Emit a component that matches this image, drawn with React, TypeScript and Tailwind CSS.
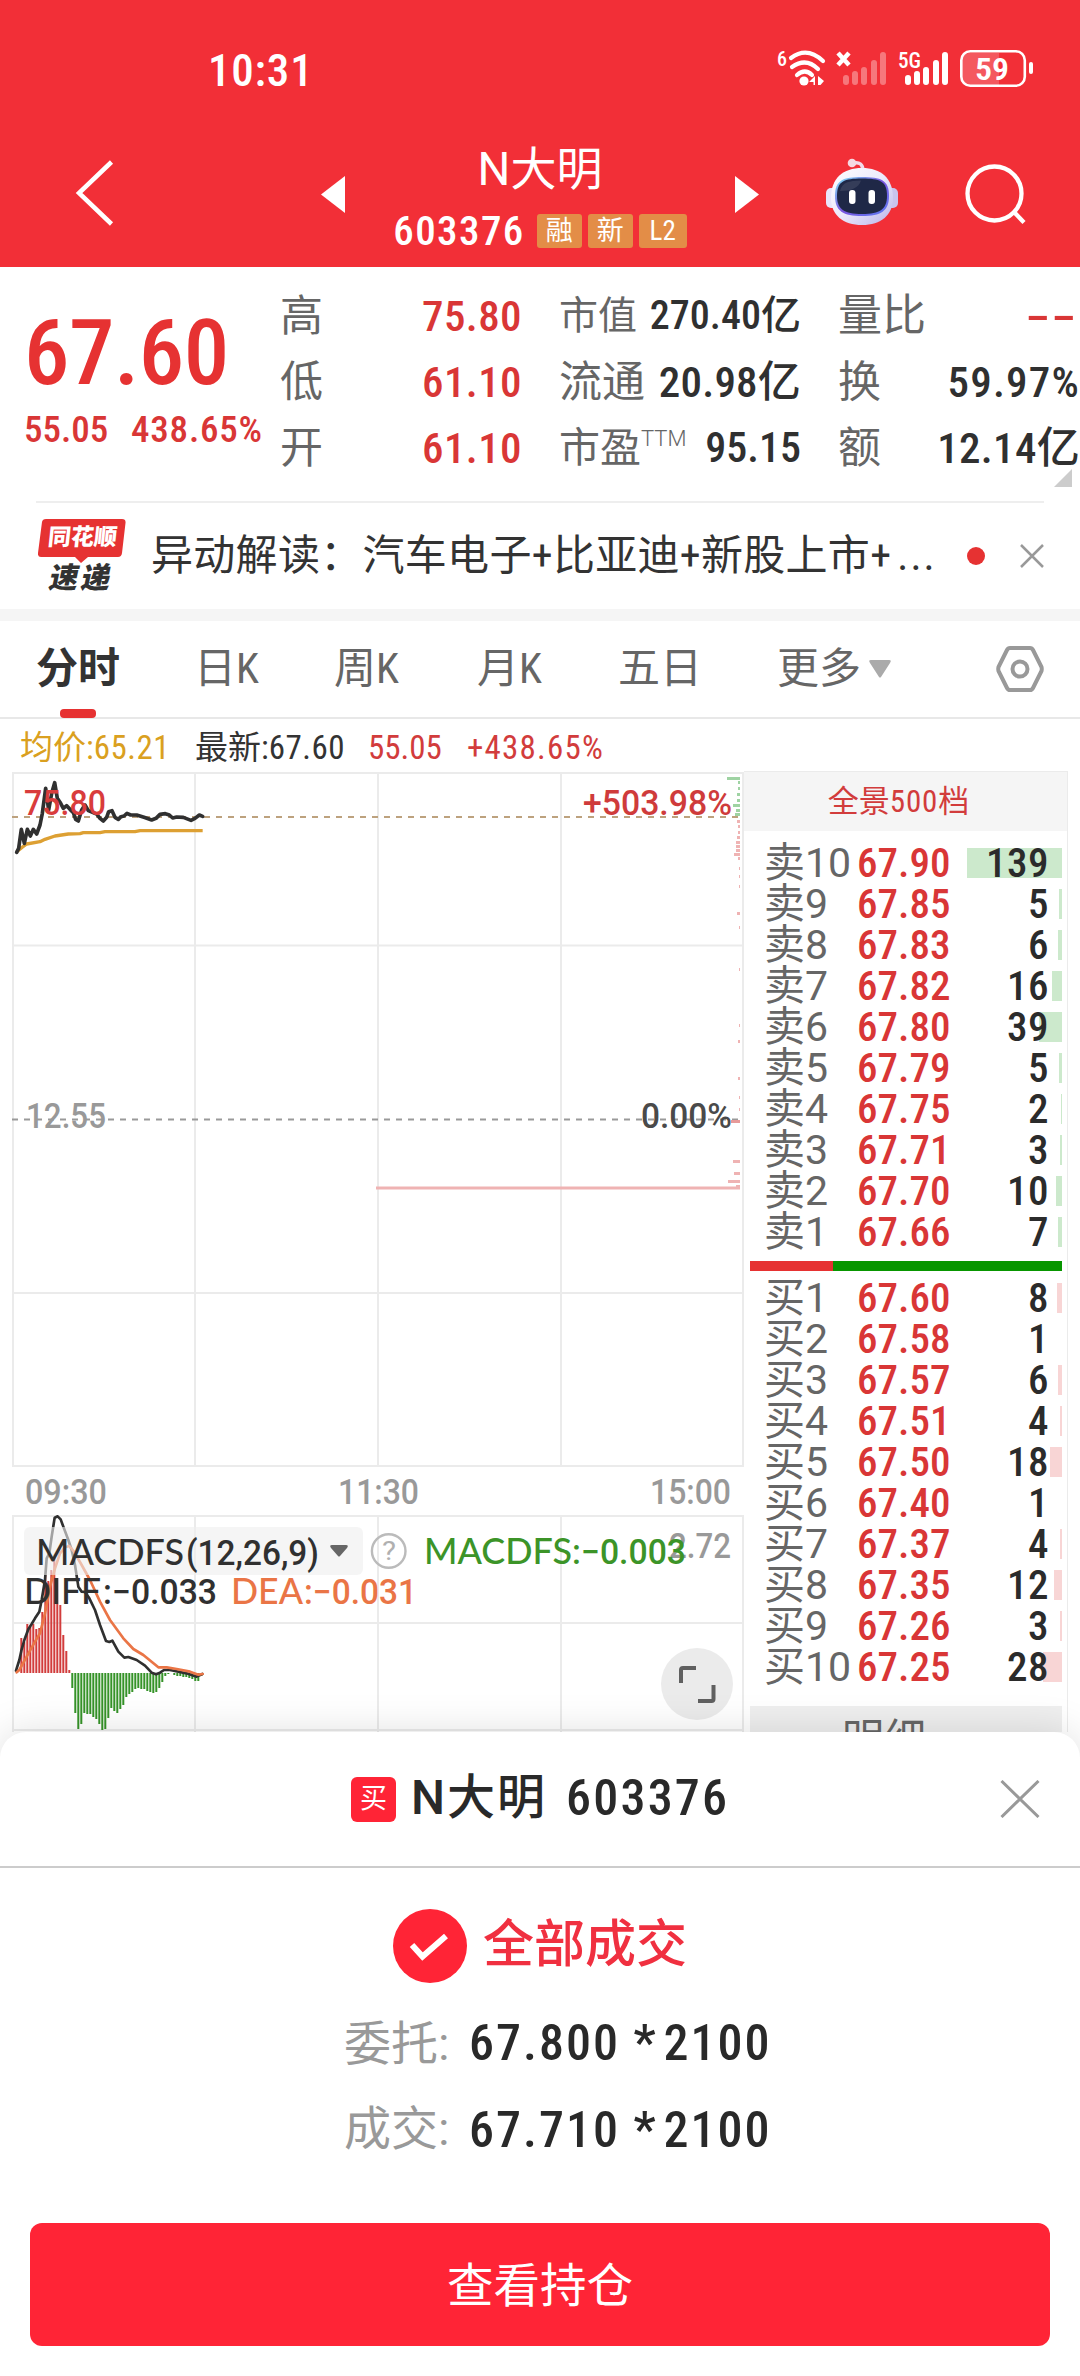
import React from "react";
import { clsx } from "clsx";

type Level = { label: string; price: string; qty: number; bar: number };

const SELLS: Level[] = [
  { label: "卖10", price: "67.90", qty: 139, bar: 95 },
  { label: "卖9", price: "67.85", qty: 5, bar: 3 },
  { label: "卖8", price: "67.83", qty: 6, bar: 4 },
  { label: "卖7", price: "67.82", qty: 16, bar: 10 },
  { label: "卖6", price: "67.80", qty: 39, bar: 23 },
  { label: "卖5", price: "67.79", qty: 5, bar: 3 },
  { label: "卖4", price: "67.75", qty: 2, bar: 1 },
  { label: "卖3", price: "67.71", qty: 3, bar: 2 },
  { label: "卖2", price: "67.70", qty: 10, bar: 6 },
  { label: "卖1", price: "67.66", qty: 7, bar: 4 },
];

const BUYS: Level[] = [
  { label: "买1", price: "67.60", qty: 8, bar: 5 },
  { label: "买2", price: "67.58", qty: 1, bar: 0 },
  { label: "买3", price: "67.57", qty: 6, bar: 4 },
  { label: "买4", price: "67.51", qty: 4, bar: 2 },
  { label: "买5", price: "67.50", qty: 18, bar: 12 },
  { label: "买6", price: "67.40", qty: 1, bar: 0 },
  { label: "买7", price: "67.37", qty: 4, bar: 2 },
  { label: "买8", price: "67.35", qty: 12, bar: 8 },
  { label: "买9", price: "67.26", qty: 3, bar: 2 },
  { label: "买10", price: "67.25", qty: 28, bar: 19 },
];

// histogram values in px, one bar every 3px
const MACD_BARS = [
  35, 31, 49, 46, 49, 44, 45, 61, 98, 92, 103, 116, 95, 68, 38, 22, 3, -15,
  -40, -56, -51, -40, -41, -41, -44, -46, -51, -57, -56, -45, -35, -38, -40,
  -36, -32, -24, -21, -19, -16, -15, -16, -16, -18, -19, -20, -19, -15, -9, -3,
  -1, 0, -2, -3, -3, -4, -4, -5, -6, -8, -8, -3,
];

const DEPTH_TICKS: [number, number, string][] = [
  [777, 13, "#9fd3a3"], [781, 2, "#9fd3a3"], [787, 2, "#9fd3a3"], [793, 3, "#9fd3a3"],
  [799, 3, "#9fd3a3"], [804, 7, "#9fd3a3"], [809, 4, "#9fd3a3"], [813, 5, "#9fd3a3"],
  [820, 3, "#efb3b3"], [825, 2, "#efb3b3"], [831, 2, "#efb3b3"], [836, 3, "#efb3b3"],
  [841, 4, "#efb3b3"], [845, 4, "#efb3b3"], [849, 4, "#efb3b3"], [853, 6, "#efb3b3"],
  [857, 2, "#efb3b3"], [867, 1, "#efb3b3"], [875, 1, "#efb3b3"], [885, 1, "#efb3b3"],
  [912, 3, "#efb3b3"], [926, 1, "#efb3b3"], [968, 1, "#efb3b3"], [1024, 1, "#efb3b3"],
  [1040, 2, "#efb3b3"], [1077, 2, "#efb3b3"], [1096, 1, "#efb3b3"], [1108, 1, "#efb3b3"],
  [1120, 9, "#e79a9a"], [1160, 7, "#efb3b3"], [1172, 6, "#efb3b3"], [1180, 12, "#efb3b3"],
  [1185, 4, "#efb3b3"],
];

function StatusBar() {
  return (
    <div className="flex h-[136px] items-center justify-between pl-[208px] pr-[46px]">
      <span className="mt-[4px] text-[45px] font-medium leading-none tracking-[0.8px]">10:31</span>
      <svg width="258" height="40" viewBox="776 50 258 40" className="mt-[3px] overflow-visible" fill="none">
        <text x="777" y="66" fontSize="21" fontWeight="500" fill="#fff" textLength="10" lengthAdjust="spacingAndGlyphs">6</text>
        <g stroke="#fff" strokeWidth="4.2" strokeLinecap="round">
          <path d="M791 58Q807 46 823 61" />
          <path d="M792 67Q806 57 818 69" />
          <path d="M797 75Q805 68 812 75" />
        </g>
        <circle cx="804" cy="81" r="4.6" fill="#fff" />
        <path d="M815 76v9h-1.500v-3h-4.500zM818 76l6 5-3.500 4h-2.500z" fill="#fff" />
        <path d="M838 53l11 12M849 53l-11 12" stroke="#fff" strokeWidth="4.500" />
        <g stroke="#fff" strokeOpacity="0.35" strokeWidth="6" strokeLinecap="round">
          <path d="M846 78v4M855 74v8M864 70v12M874 63v19M883 55v27" />
        </g>
        <text x="898" y="68" fontSize="22" fontWeight="500" fill="#fff" textLength="23" lengthAdjust="spacingAndGlyphs">5G</text>
        <g stroke="#fff" strokeWidth="6" strokeLinecap="round">
          <path d="M908 78v4M917 74v8M926 70v12M936 63v19M945 55v27" />
        </g>
        <path d="M969 53h30v32h-30q-7 0-7-7V60q0-7 7-7z" fill="#fff" fillOpacity="0.2" />
        <rect x="961.300" y="51.300" width="63.500" height="34.500" rx="9" stroke="#fff" strokeWidth="2.600" />
        <rect x="1029" y="62" width="4" height="12" rx="2" fill="#fff" />
        <text x="975" y="79.500" fontSize="31" fontWeight="600" fill="#fff" textLength="34" lengthAdjust="spacingAndGlyphs">59</text>
      </svg>
    </div>
  );
}

function RobotIcon() {
  return (
    <svg width="74" height="70" viewBox="0 0 74 70" fill="none">
      <defs>
        <linearGradient id="shell" x1="0" y1="0" x2="1" y2="1">
          <stop offset="0" stopColor="#ffffff" />
          <stop offset="0.500" stopColor="#ece9fb" />
          <stop offset="1" stopColor="#b9b4ea" />
        </linearGradient>
        <linearGradient id="visor" x1="0" y1="0" x2="1" y2="1">
          <stop offset="0" stopColor="#7fe3f5" />
          <stop offset="0.500" stopColor="#7a55e0" />
          <stop offset="1" stopColor="#5b7cf2" />
        </linearGradient>
      </defs>
      <path d="M28 5Q38 3 38 13" stroke="#f2dcea" strokeWidth="3.500" />
      <circle cx="27" cy="5" r="4.300" fill="#f6d9e2" />
      <rect x="1" y="30" width="12" height="20" rx="5" fill="#e9e5fa" />
      <rect x="61" y="30" width="12" height="20" rx="5" fill="#c9c3ee" />
      <path d="M37 10C56 10 68 20 68 40C68 57 56 67 37 67C18 67 6 57 6 40C6 20 18 10 37 10Z" fill="url(#shell)" />
      <path d="M37 19C56 19 64 22 64 38C64 53 56 58 37 58C18 58 10 53 10 38C10 22 18 19 37 19Z" fill="url(#visor)" />
      <path d="M37 20.500C55 20.500 62 23 62 38C62 51 55 56 37 56C19 56 12 51 12 38C12 23 19 20.500 37 20.500Z" fill="#1f2847" />
      <path d="M15 33C17 24 24 23 36 22.500C34 30 26 33 15 33Z" fill="#fff" fillOpacity="0.100" />
      <rect x="24" y="32" width="6.500" height="14" rx="3" fill="#fff" />
      <rect x="43.500" y="32" width="6.500" height="14" rx="3" fill="#fff" />
    </svg>
  );
}

function Tag({ children, className }: { children: React.ReactNode; className?: string }) {
  return (
    <span className={clsx("flex h-[34px] items-center justify-center rounded-[3px] bg-[#e38d47] text-[27px] leading-none", className)}>
      {children}
    </span>
  );
}

function Header() {
  return (
    <header className="h-[267px] bg-[#f22f37] text-white">
      <StatusBar />
      <div className="flex h-[120px] pl-[75px] pr-[52px]">
        <svg width="40" height="66" viewBox="0 0 40 66" className="mt-[24px]" fill="none">
          <path d="M36.500 2L4 33L36.500 64" stroke="#fff" strokeWidth="4.500" />
        </svg>
        <svg width="24" height="37" viewBox="0 0 24 37" className="ml-[206px] mt-[40px]">
          <path d="M24 0v37L0 18.500z" fill="#fff" />
        </svg>
        <div className="flex w-[390px] flex-col items-center">
          <div className="mt-[8px] h-[50px] text-[46px] leading-[50px] [font-stretch:100%]">N大明</div>
          <div className="mt-[20px] flex h-[34px] items-center gap-[6px]">
            <span className="mr-[6px] text-[41px] font-medium leading-none tracking-[1.4px]">603376</span>
            <Tag className="w-[45px]">融</Tag>
            <Tag className="w-[45px]">新</Tag>
            <Tag className="w-[48px]">L2</Tag>
          </div>
        </div>
        <svg width="24" height="37" viewBox="0 0 24 37" className="mt-[40px]">
          <path d="M0 0v37L24 18.500z" fill="#fff" />
        </svg>
        <div className="ml-[66px] mt-[22px]">
          <RobotIcon />
        </div>
        <svg width="64" height="62" viewBox="0 0 64 62" className="ml-auto mt-[27px]" fill="none" stroke="#fff" strokeWidth="4.300">
          <circle cx="30.500" cy="30.500" r="27" />
          <path d="M49.500 48.500L60 59.500" />
        </svg>
      </div>
    </header>
  );
}

function Cell({ label, value, red, labelSize = "text-[43px]", valueSize = "text-[43px] tracking-[0.4px]" }: {
  label: React.ReactNode; value: React.ReactNode; red?: boolean; labelSize?: string; valueSize?: string;
}) {
  return (
    <div className="flex h-[66px] items-center justify-between leading-none">
      <span className={clsx("whitespace-nowrap text-[#666]", labelSize)}>{label}</span>
      <span className={clsx("whitespace-nowrap font-medium", valueSize, red ? "text-[#d93636]" : "text-[#303030]")}>{value}</span>
    </div>
  );
}

function Quote() {
  return (
    <section className="relative flex h-[234px] pt-[16px]">
      <div className="w-[280px] pl-[24px]">
        <div className="mt-[25px] h-[90px] text-[91px] font-medium leading-[90px] tracking-[-0.5px] text-[#e63232]">67.60</div>
        <div className="mt-[11px] flex h-[40px] items-center whitespace-nowrap text-[37px] font-medium leading-none text-[#d93636]">
          <span className="w-[107px]">55.05</span>
          <span className="tracking-[0.8px]">438.65%</span>
        </div>
      </div>
      <div className="w-[242px]">
        <Cell label="高" value="75.80" red />
        <Cell label="低" value="61.10" red />
        <Cell label="开" value="61.10" red />
      </div>
      <div className="ml-[37px] w-[242px]">
        <Cell label="市值" labelSize="text-[39px]" value="270.40亿" valueSize="text-[40px]" />
        <Cell label="流通" value="20.98亿" valueSize="text-[43px] tracking-[0.2px]" />
        <Cell
          label={<>市盈<sup className="-top-[16px] text-[22px] font-light [font-stretch:100%]">TTM</sup></>}
          labelSize="text-[41px]"
          value="95.15"
          valueSize="text-[42px]"
        />
      </div>
      <div className="ml-[37px] w-[242px]">
        <Cell label="量比" labelSize="text-[44px]" value={<span className="mr-[3px] inline-block origin-right scale-x-[1.9]">--</span>} red />
        <Cell label="换" value="59.97%" valueSize="text-[43px] tracking-[1.2px]" />
        <Cell label="额" value="12.14亿" valueSize="text-[43px] tracking-[0.3px]" />
      </div>
      <svg width="18" height="18" viewBox="0 0 18 18" className="absolute right-[8px] top-[202px]">
        <path d="M18 0v18H0z" fill="#ccc" />
      </svg>
    </section>
  );
}

function News() {
  return (
    <section className="mx-[36px] flex h-[108px] items-center border-t-2 border-[#eee]">
      <div className="relative ml-[2px] flex h-[74px] w-[88px] flex-col items-center">
        <svg width="88" height="46" viewBox="0 0 88 46" className="absolute left-0 top-0">
          <path d="M8 0H84Q88 0 87.500 4L84 34Q83.500 38 80 38H50L43 44L37 38H3Q-0.500 38 0 34L4 3Q4.500 0 8 0Z" fill="#e63232" />
        </svg>
        <span className="relative mt-[6px] -skew-x-6 text-[23px] font-black leading-[26px] text-white">同花顺</span>
        <span className="relative mt-[12px] -skew-x-12 whitespace-nowrap text-[29px] font-black leading-[30px] tracking-[3px] text-[#333]">速递</span>
      </div>
      <span className="ml-[25px] w-[816px] whitespace-nowrap text-[42px] leading-none tracking-[0.3px] text-[#333]">
        异动解读：汽车电子+比亚迪+新股上市+<span className="ml-[6px] tracking-[2px] [font-stretch:100%]">...</span>
      </span>
      <i className="h-[18px] w-[18px] rounded-full bg-[#e63232]" />
      <svg width="24" height="24" viewBox="0 0 24 24" className="ml-auto" stroke="#999" strokeWidth="2.500">
        <path d="M1 1l22 22M23 1L1 23" />
      </svg>
    </section>
  );
}

function Tabs() {
  return (
    <nav className="flex h-[98px] items-center border-b-2 border-[#e8e8e8] pl-[36px] pr-[36px] text-[42px] leading-none text-[#666]">
      <span className="relative flex h-full w-[158px] items-center font-bold text-[#333]">
        分时
        <i className="absolute -bottom-[1px] left-[24px] h-[9px] w-[36px] rounded-[4px] bg-[#e63232]" />
      </span>
      <span className="w-[140px]">日K</span>
      <span className="w-[143px]">周K</span>
      <span className="w-[141px]">月K</span>
      <span className="w-[159px]">五日</span>
      <span>更多</span>
      <svg width="22" height="18" viewBox="0 0 22 18" className="ml-[8px]">
        <path d="M2 0H20Q23 0 21 3L12 17Q11 18 10 17L1 3Q-1 0 2 0Z" fill="#aaa" />
      </svg>
      <svg width="48" height="46" viewBox="0 0 48 46" className="ml-auto" fill="none" stroke="#999" strokeWidth="4">
        <path d="M14 2H34Q36 2 37 4L45.500 21Q46 23 45.500 25L37 42Q36 44 34 44H14Q12 44 11 42L2.500 25Q2 23 2.500 21L11 4Q12 2 14 2Z" />
        <circle cx="24" cy="23" r="7.500" />
      </svg>
    </nav>
  );
}

function ChartText({ x, y, w, fill, size = 35, weight = 500, children }: {
  x: number; y: number; w: number; fill: string; size?: number; weight?: number; children: string;
}) {
  return (
    <text x={x} y={y} textLength={w} lengthAdjust="spacingAndGlyphs" fontSize={size} fontWeight={weight} fill={fill}>
      {children}
    </text>
  );
}

function Chart() {
  return (
    <svg width="744" height="961" viewBox="0 771 744 961" className="shrink-0 [font-stretch:100%]" fill="none">
      <g stroke="#ebebeb" strokeWidth="2">
        <path d="M12 773H744M12 945.500H744M12 1293H744M12 1466H744" />
        <path d="M13 772V1466M195 772V1466M378 772V1466M561 772V1466M743 772V1466" />
        <path d="M12 1516H744M12 1623H744M12 1730H744" />
        <path d="M13 1516V1732M195 1516V1732M378 1516V1732M561 1516V1732M743 1516V1732" />
      </g>
      <path d="M12 817H740" stroke="#bda27e" strokeWidth="2" strokeDasharray="6 6" />
      <path d="M12 1119.500H740" stroke="#999" strokeWidth="2" strokeDasharray="6 6" />
      {DEPTH_TICKS.map(([y, w, color]) => (
        <rect key={y} x={740 - w} y={y} width={w} height={3} fill={color} />
      ))}
      <path d="M376 1188H740" stroke="#efb3b3" strokeWidth="3" />

      <path
        transform="translate(0 760) scale(0.33333)"
        d="M50 275L66 262L80 252L120 245L135 238L165 228L205 222L240 221L250 218H300L315 215H405L420 212H608"
        stroke="#dda033" strokeWidth="10" strokeLinejoin="round"
      />
      <path
        transform="translate(0 760) scale(0.33333)"
        d="M50 277L56 265L64 208L73 250L82 208L91 228L100 208L110 222L120 195L127 160L137 85L146 150L155 100L164 68L172 115L182 130L190 145L200 137L210 148L220 158L227 178L235 183L245 150L255 135L265 152L290 162L300 175L310 183L320 172L326 155L336 152L345 172L355 178L363 170L372 168L381 160L392 165H410L432 172L455 180L468 175L480 163L496 161L508 165L518 174L530 171L550 172L573 181L585 175L598 165L608 169"
        stroke="#303030" strokeWidth="11" strokeLinejoin="round" strokeLinecap="round"
      />
      <ChartText x={24} y={815} w={82} fill="#d93c3c">75.80</ChartText>
      <ChartText x={583} y={815} w={149} fill="#cf3b3b">+503.98%</ChartText>
      <ChartText x={26} y={1128} w={80} fill="#999">12.55</ChartText>
      <ChartText x={641} y={1128} w={91} fill="#4a4a4a">0.00%</ChartText>

      <ChartText x={25} y={1504} w={82} fill="#999">09:30</ChartText>
      <ChartText x={338} y={1504} w={81} fill="#999">11:30</ChartText>
      <ChartText x={650} y={1504} w={81} fill="#999">15:00</ChartText>

      {MACD_BARS.map((v, i) => (
        <rect
          key={i}
          x={20.3 + i * 3}
          y={v > 0 ? 1673 - v : 1673}
          width={2}
          height={Math.abs(v)}
          fill={v > 0 ? "#d23c3c" : "#359328"}
        />
      ))}
      <g transform="translate(0 1440) scale(0.33333)" strokeLinejoin="round" strokeLinecap="round" strokeWidth="8">
        <path
          d="M48 692L58 660L64 632L73 600L85 568L95 552L105 535L118 515L125 480L135 420L140 355L148 340L155 290L164 233L173 229L182 238L190 260L205 300L215 330L225 375L235 440L245 455L255 456L268 475L285 510L300 555L318 603L328 606L337 602L355 635L373 653L385 651L410 660L435 677L455 698L468 703L480 698L492 690H510L560 700L590 710L607 702"
          stroke="#303030"
        />
        <path
          d="M50 697L58 690L80 650L105 605L120 580L135 520L150 440L165 385L180 340L195 322L208 318L222 335L245 375L270 420L300 485L330 540L370 595L400 627L430 645L475 682H500L530 687L570 695L595 704L608 702"
          stroke="#ea7546"
        />
      </g>

      <rect x="24" y="1527" width="339" height="48" rx="6" fill="#efefef" fillOpacity="0.600" />
      <g className="font-[Lato,Roboto]">
        <ChartText x={36} y={1565} w={148} size={36} fill="#303030">MACDFS</ChartText>
        <ChartText x={424} y={1564} w={148} size={36} fill="#3c9428">MACDFS</ChartText>
        <ChartText x={24} y={1604} w={77} size={36} fill="#303030">DIFF</ChartText>
        <ChartText x={231} y={1604} w={72} size={36} fill="#ea7546">DEA</ChartText>
      </g>
      <ChartText x={186} y={1565} w={133} fill="#303030">(12,26,9)</ChartText>
      <path d="M332 1545H346Q349 1545 347 1548L340 1556Q339 1557 338 1556L331 1548Q329 1545 332 1545Z" fill="#666" />
      <circle cx="388.700" cy="1551" r="16.800" stroke="#bbb" strokeWidth="2.400" />
      <ChartText x={382} y={1560} w={14} size={26} weight={400} fill="#b0b0b0">?</ChartText>
      <ChartText x={669} y={1558} w={62} fill="#999">2.72</ChartText>
      <ChartText x={572} y={1564} w={114} fill="#3c9428">:−0.003</ChartText>
      <ChartText x={103} y={1604} w={114} fill="#303030">:−0.033</ChartText>
      <ChartText x={304} y={1604} w={113} fill="#ea7546">:−0.031</ChartText>

      <circle cx="697" cy="1684" r="36" fill="#ebebeb" />
      <path d="M681 1683V1670Q681 1668 683 1668H696M713.500 1685V1699Q713.500 1701 711.500 1701H698" stroke="#606060" strokeWidth="4" />
    </svg>
  );
}

function LevelRow({ label, price, qty, bar, sell }: Level & { sell?: boolean }) {
  return (
    <div className="relative flex h-[41px] items-center whitespace-nowrap leading-none">
      <i
        className={clsx("absolute right-[5px] top-[5px] h-[30px]", sell ? "bg-[#cce9cc]" : "bg-[#f8d5d5]")}
        style={{ width: bar }}
      />
      <span className="relative ml-[20px] w-[93px] text-[41px] text-[#666] [font-stretch:100%]">{label}</span>
      <span className="relative text-[41px] font-medium text-[#d93636]">{price}</span>
      <span className="relative ml-auto mr-[18px] text-[41px] font-medium tracking-[0.5px] text-[#2b2b2b]">{qty}</span>
    </div>
  );
}

function OrderBook() {
  return (
    <div className="h-[961px] w-[324px] overflow-hidden border-r border-t border-[#ebebeb]">
      <div className="flex h-[59px] items-center justify-center bg-[#f5f5f5] pr-[14px] text-[31px] leading-none text-[#d23c3c]">
        全景<span className="tracking-[0.8px]">500</span>档
      </div>
      <div className="mt-[12px]">
        {SELLS.map((l) => (
          <LevelRow key={l.label} {...l} sell />
        ))}
      </div>
      <div className="ml-[6px] mr-[5px] mt-[8px] flex h-[10px]">
        <i className="w-[83px] bg-[#e63232]" />
        <i className="flex-1 bg-[#089600]" />
      </div>
      <div className="mt-[7px]">
        {BUYS.map((l) => (
          <LevelRow key={l.label} {...l} />
        ))}
      </div>
      <div className="ml-[6px] mr-[5px] mt-[18px] h-[60px] bg-[#efefef] pr-[44px] pt-[12px] text-center text-[42px] leading-[44px] text-[#666]">
        明细
      </div>
    </div>
  );
}

function OrderSheet() {
  return (
    <section className="relative h-[644px] rounded-t-[26px] bg-white shadow-[0_0_40px_rgba(0,0,0,0.13)]">
      <div className="flex h-[136px] items-center border-b-2 border-[#ccc] pl-[351px] pr-[40px] leading-none">
        <span className="flex h-[45px] w-[45px] items-center justify-center rounded-[6px] bg-[#ff2436] text-[27px] text-white">买</span>
        <span className="ml-[15px] flex items-center gap-[19px] whitespace-nowrap pb-[2px] font-medium text-[#292929]">
          <span className="text-[48px] tracking-[2px] [font-stretch:100%]">N大明</span>
          <span className="text-[50px] tracking-[2.2px]">603376</span>
        </span>
        <svg width="40" height="38" viewBox="0 0 40 38" className="ml-auto" stroke="#999" strokeWidth="3">
          <path d="M1.500 1l37 36M38.500 1L1.500 37" />
        </svg>
      </div>
      <div className="mt-[41px] flex h-[74px] items-center pl-[393px]">
        <svg width="74" height="74" viewBox="0 0 74 74" fill="none">
          <circle cx="37" cy="37" r="37" fill="#ff2436" />
          <path d="M19 36L29.500 47.500L53 27" stroke="#fff" strokeWidth="6" />
        </svg>
        <span className="ml-[16px] pb-[3px] text-[51px] font-medium leading-none text-[#f03040]">全部成交</span>
      </div>
      <div className="mt-[18px] flex h-[84px] items-center pl-[344px] leading-none">
        <span className="w-[125px] text-[47px] text-[#999]">委托:</span>
        <span className="text-[50px] font-medium tracking-[2px] text-[#292929]">67.800 <span className="mr-[6px]">*</span>2100</span>
      </div>
      <div className="mt-[3px] flex h-[84px] items-center pl-[344px] leading-none">
        <span className="w-[125px] pb-[4px] text-[47px] text-[#999]">成交:</span>
        <span className="text-[50px] font-medium tracking-[2px] text-[#292929]">67.710 <span className="mr-[6px]">*</span>2100</span>
      </div>
      <button className="mx-[30px] mt-[51px] flex h-[123px] w-[1020px] items-center justify-center rounded-[12px] bg-[#ff2436] pt-[4px] text-[46.500px] leading-none text-white">
        查看持仓
      </button>
    </section>
  );
}

export default function App() {
  return (
    <div className="h-[2376px] w-[1080px] overflow-hidden bg-white font-[Roboto,'Noto_Sans_CJK_SC',sans-serif] [font-stretch:87.5%]">
      <div className="h-[1732px]">
        <Header />
        <Quote />
        <News />
        <div className="h-[12px] bg-[#f5f5f5]" />
        <Tabs />
        <div className="flex h-[52px] items-center whitespace-nowrap pl-[20px] pt-[4px] text-[33px] leading-none">
          <span className="w-[175px] text-[#daa020]">均价:<span className="tracking-[0.5px]">65.21</span></span>
          <span className="w-[173px] text-[#333]">最新:<span className="tracking-[0.5px]">67.60</span></span>
          <span className="w-[99px] text-[#d23c3c]">55.05</span>
          <span className="tracking-[1.2px] text-[#d23c3c]">+438.65%</span>
        </div>
        <div className="flex">
          <Chart />
          <OrderBook />
        </div>
      </div>
      <OrderSheet />
    </div>
  );
}
